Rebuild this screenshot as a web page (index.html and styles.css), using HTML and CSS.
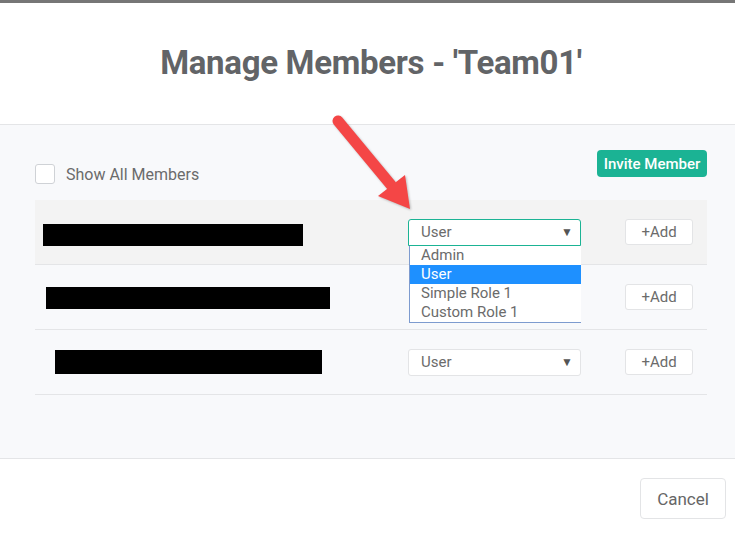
FILE: index.html
```html
<!DOCTYPE html>
<html lang="en">
<head>
    <meta charset="UTF-8">
    <meta name="viewport" content="width=device-width, initial-scale=1.0">
    <title>Manage Members</title>
    <link rel="stylesheet" href="styles.css">
</head>
<body>
    <div class="modal">
        <!-- Header -->
        <div class="modal-header">
            <h1>Manage Members - 'Team01'</h1>
        </div>

        <!-- Body -->
        <div class="modal-body">
            <div class="toolbar">
                <label class="show-all">
                    <span class="checkbox"></span>
                    Show All Members
                </label>
                <button class="btn-invite">Invite Member</button>
            </div>

            <div class="member-row active">
                <div class="name-bar bar-1"></div>
                <div class="role-select focused">
                    <span>User</span><span class="caret">&#9660;</span>
                    <ul class="role-list">
                        <li>Admin</li>
                        <li class="selected">User</li>
                        <li>Simple Role 1</li>
                        <li>Custom Role 1</li>
                    </ul>
                </div>
                <button class="btn-add">+Add</button>
            </div>

            <div class="member-row">
                <div class="name-bar bar-2"></div>
                <div></div>
                <button class="btn-add">+Add</button>
            </div>

            <div class="member-row">
                <div class="name-bar bar-3"></div>
                <div class="role-select">
                    <span>User</span><span class="caret">&#9660;</span>
                </div>
                <button class="btn-add">+Add</button>
            </div>
        </div>

        <!-- Footer -->
        <div class="modal-footer">
            <button class="btn-cancel">Cancel</button>
        </div>
    </div>

    <!-- annotation arrow -->
    <svg class="arrow" width="735" height="537" viewBox="0 0 735 537">
        <line x1="338" y1="121" x2="391" y2="185" stroke="#f44646" stroke-width="11" stroke-linecap="round"/>
        <polygon points="378,196 405,175 410,209" fill="#f44646"/>
    </svg>
</body>
</html>
```

FILE: styles.css
```css
body {
    margin: 0;
    font-family: Roboto, "Liberation Sans", sans-serif;
    color: #666;
    background-color: #fff;
}
.modal {
    border-top: 3px solid #767676;
    height: 534px;
    display: flex;
    flex-direction: column;
}
.modal-header {
    height: 121px;
    border-bottom: 1px solid #e4e5e7;
    display: flex;
    align-items: center;
    justify-content: center;
}
.modal-header h1 {
    margin: 0 0 0 7px;
    padding-bottom: 2px;
    font-size: 33px;
    font-weight: 700;
    color: #626467;
    letter-spacing: -0.3px;
}
.modal-body {
    height: 334px;
    background-color: #f8f9fb;
    border-bottom: 1px solid #e4e5e7;
    padding: 25px 28px 0 35px;
    box-sizing: border-box;
}
.toolbar {
    display: flex;
    justify-content: space-between;
    align-items: flex-start;
    height: 50px;
}
.show-all {
    display: flex;
    align-items: center;
    gap: 11px;
    margin-top: 14px;
    font-size: 16px;
    color: #6b6b6b;
}
.checkbox {
    width: 18px;
    height: 18px;
    border: 1px solid #cfd2d6;
    border-radius: 3px;
    background-color: #fff;
}
.btn-invite {
    height: 27px;
    width: 110px;
    padding: 0;
    border: none;
    border-radius: 4px;
    background-color: #1bb394;
    color: #fff;
    font-family: inherit;
    font-size: 15px;
    font-weight: 500;
    cursor: pointer;
}
.member-row {
    height: 64px;
    border-bottom: 1px solid #e4e5e7;
    display: grid;
    grid-template-columns: 1fr 173px 68px;
    column-gap: 44px;
    padding-right: 14px;
    align-items: center;
}
.member-row.active {
    background-color: #f3f3f3;
}
.name-bar {
    height: 22px;
    background-color: #000;
}
.bar-1 { margin: 6px 0 0 8px; width: 260px; }
.bar-2 { margin: 1px 0 0 11px; width: 284px; }
.bar-3 { margin: 0 0 0 20px; width: 267px; height: 24px; }
.role-select {
    position: relative;
    height: 27px;
    box-sizing: border-box;
    border: 1px solid #e3e4e6;
    border-radius: 3px;
    background-color: #fff;
    display: flex;
    align-items: center;
    justify-content: space-between;
    padding: 0 7px 0 12px;
    font-size: 15px;
    color: #6b6b6b;
}
.role-select.focused {
    border-color: #1bb394;
    border-radius: 3px 3px 0 0;
}
.caret {
    font-size: 12px;
    color: #555;
}
.role-list {
    position: absolute;
    top: 26px;
    left: 0;
    width: 172px;
    margin: 0;
    padding: 0;
    list-style: none;
    background-color: #fff;
    border: 1px solid #7d9bcf;
    border-top: none;
    border-right: none;
    box-sizing: border-box;
    z-index: 2;
}
.role-list li {
    height: 19px;
    line-height: 18px;
    padding-left: 11px;
    font-size: 15px;
    color: #6b6b6b;
}
.role-list li.selected {
    background-color: #1e90ff;
    color: #fff;
}
.btn-add {
    height: 26px;
    padding: 0;
    border: 1px solid #e3e4e6;
    border-radius: 3px;
    background-color: #fff;
    color: #6b6b6b;
    font-family: inherit;
    font-size: 15px;
    cursor: pointer;
}
.modal-footer {
    flex: 1;
    display: flex;
    justify-content: flex-end;
    align-items: flex-start;
    padding: 19px 9px 0 0;
}
.btn-cancel {
    width: 86px;
    height: 41px;
    border: 1px solid #e3e4e6;
    border-radius: 4px;
    background-color: #fff;
    color: #666;
    font-family: inherit;
    font-size: 17px;
    cursor: pointer;
}
.arrow {
    position: absolute;
    top: 0;
    left: 0;
    pointer-events: none;
    filter: drop-shadow(1px 1px 1px rgba(0, 0, 0, 0.25));
}
```
